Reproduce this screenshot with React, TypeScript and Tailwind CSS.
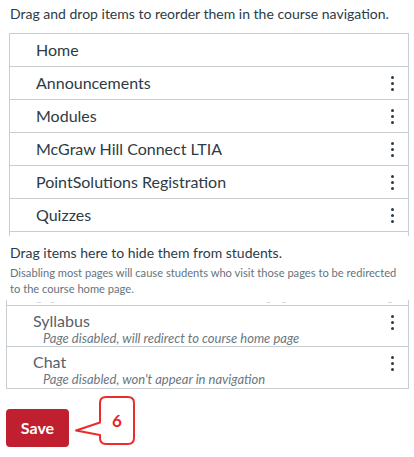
import React from "react";

const navItems = [
  { label: "Home", menu: false },
  { label: "Announcements", menu: true },
  { label: "Modules", menu: true },
  { label: "McGraw Hill Connect LTIA", menu: true },
  { label: "PointSolutions Registration", menu: true },
  { label: "Quizzes", menu: true },
];

const hiddenItems = [
  { label: "Syllabus", note: "Page disabled, will redirect to course home page" },
  { label: "Chat", note: "Page disabled, won't appear in navigation" },
];

function Kebab() {
  return (
    <div className="flex flex-col gap-[3px]">
      <span className="h-[3px] w-[3px] rounded-full bg-[#2d3b45]" />
      <span className="h-[3px] w-[3px] rounded-full bg-[#2d3b45]" />
      <span className="h-[3px] w-[3px] rounded-full bg-[#2d3b45]" />
    </div>
  );
}

function Callout() {
  return (
    <svg width="62" height="52" viewBox="0 0 62 52" className="ml-[5px]">
      <path
        d="M32 2 H54 Q60 2 60 8 V43 Q60 49 54 49 H32 Q26 49 26 43 V40 L2 35.5 L26 27.5 V8 Q26 2 32 2 Z"
        fill="white"
        stroke="#ee2b2b"
        strokeWidth="2"
        strokeLinejoin="round"
      />
      <text
        x="43"
        y="32"
        textAnchor="middle"
        fontSize="17"
        fontWeight="700"
        fill="#e8252b"
        fontFamily="Lato, 'Liberation Sans', sans-serif"
      >
        6
      </text>
    </svg>
  );
}

export default function App() {
  return (
    <div className="h-[457px] w-[414px] overflow-hidden bg-white font-['Lato','Liberation_Sans',sans-serif] text-[#2d3b45]">
      <p className="pl-[10px] pt-[5px] text-[14px] leading-[18px]">
        Drag and drop items to reorder them in the course navigation.
      </p>

      {/* Enabled items */}
      <div className="ml-[9px] mt-[10px] h-[203px] w-[400px] overflow-hidden border-x border-t border-[#c7cdd1]">
        {navItems.map((item) => (
          <div
            key={item.label}
            className="flex h-[33px] items-center justify-between border-b border-[#c7cdd1] pl-[26px] pr-[14px]"
          >
            <span className="text-[16px]">{item.label}</span>
            {item.menu && <Kebab />}
          </div>
        ))}
      </div>

      <p className="mt-[8px] pl-[10px] text-[14px] leading-[18px]">
        Drag items here to hide them from students.
      </p>
      <p className="mt-[3px] pl-[10px] pr-[8px] text-[11.15px] leading-[16px] text-[#66737c]">
        Disabling most pages will cause students who visit those pages to be redirected to the course home page.
      </p>

      {/* Disabled items */}
      <div className="ml-[6px] mt-[3px] w-[403px] border-x border-b border-[#c7cdd1]">
        <div className="flex h-[5px] items-start">
          <span className="ml-[30px] mt-[2px] h-px w-[4px] bg-[#d5d9dc]" />
          <span className="ml-[10px] mt-[2px] h-px w-[3px] bg-[#d5d9dc]" />
          <span className="ml-[213px] mt-[2px] h-px w-[3px] bg-[#d5d9dc]" />
          <span className="ml-[12px] mt-[2px] h-px w-[4px] bg-[#d5d9dc]" />
          <span className="ml-[102px] mt-[2px] h-px w-[4px] bg-[#d5d9dc]" />
        </div>
        {hiddenItems.map((item, i) => (
          <div
            key={item.label}
            className={`flex items-start justify-between border-t border-[#c7cdd1] pl-[26px] pr-[14px] ${
              i === 0 ? "h-[41px]" : "h-[42px]"
            }`}
          >
            <div className="pt-[6px]">
              <div className="text-[16px] leading-[18px] text-[#56626b]">{item.label}</div>
              <div className="mt-[1px] pl-[10px] text-[13px] italic leading-[14px] text-[#6b7780]">
                {item.note}
              </div>
            </div>
            <div className="pt-[9px]">
              <Kebab />
            </div>
          </div>
        ))}
      </div>

      <div className="ml-[6px] mt-[6px] flex items-start">
        <button className="mt-[14px] h-[38px] w-[63px] rounded-[4px] bg-[#bf1f2f] text-[16px] font-bold text-white">
          Save
        </button>
        <Callout />
      </div>
    </div>
  );
}
